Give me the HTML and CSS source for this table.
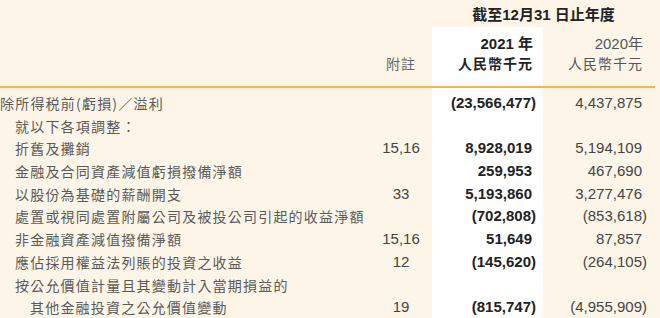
FILE: index.html
```html
<!DOCTYPE html>
<html lang="zh-Hant">
<head>
<meta charset="utf-8">
<link rel="stylesheet" href="styles.css">
</head>
<body>
<div class="sheet">
  <div class="head-top"></div>
  <div class="head-top"></div>
  <div class="head-period">截至12月31 日止年度</div>

  <div class="hcell"></div>
  <div class="hcell note-h">附註</div>
  <div class="hcell cur"><span>2021 年</span><span>人民幣千元</span></div>
  <div class="hcell prev"><span>2020年</span><span>人民幣千元</span></div>

  <div class="lbl pt">除所得税前(虧損)／溢利</div><div class="note pt"></div><div class="num cur pt">(23,566,477)</div><div class="num prev pt pos">4,437,875</div>
  <div class="lbl i1">就以下各項調整：</div><div class="note"></div><div class="num cur"></div><div class="num prev"></div>
  <div class="lbl i1">折舊及攤銷</div><div class="note">15,16</div><div class="num cur pos">8,928,019</div><div class="num prev pos">5,194,109</div>
  <div class="lbl i1">金融及合同資產減值虧損撥備淨額</div><div class="note"></div><div class="num cur pos">259,953</div><div class="num prev pos">467,690</div>
  <div class="lbl i1">以股份為基礎的薪酬開支</div><div class="note">33</div><div class="num cur pos">5,193,860</div><div class="num prev pos">3,277,476</div>
  <div class="lbl i1">處置或視同處置附屬公司及被投公司引起的收益淨額</div><div class="note"></div><div class="num cur">(702,808)</div><div class="num prev">(853,618)</div>
  <div class="lbl i1">非金融資產減值撥備淨額</div><div class="note">15,16</div><div class="num cur pos">51,649</div><div class="num prev pos">87,857</div>
  <div class="lbl i1">應佔採用權益法列賬的投資之收益</div><div class="note">12</div><div class="num cur">(145,620)</div><div class="num prev">(264,105)</div>
  <div class="lbl i1">按公允價值計量且其變動計入當期損益的</div><div class="note"></div><div class="num cur"></div><div class="num prev"></div>
  <div class="lbl i2">其他金融投資之公允價值變動</div><div class="note">19</div><div class="num cur">(815,747)</div><div class="num prev faded">(4,955,909)</div>
</div>
</body>
</html>
```

FILE: styles.css
```css
html, body {
  margin: 0;
  padding: 0;
  background: #fdf6e8;
}

.sheet {
  display: grid;
  grid-template-columns: 370px 62px 111px 112px;
  grid-template-rows: 27px auto 26.7px;
  grid-auto-rows: 22.7px;
  font-family: "Liberation Sans", Arial, sans-serif;
  color: #444;
}

.head-top {
  grid-row: 1;
}

.head-period {
  grid-row: 1;
  grid-column: 3 / 5;
  text-align: center;
  font-family: "Liberation Sans", "Noto Sans CJK TC", sans-serif;
  font-weight: bold;
  font-size: 15px;
  line-height: 30px;
  color: #222;
}

.hcell {
  grid-row: 2;
  padding: 7px 0 12px;
  border-bottom: 2px solid #f3b64c;
  display: flex;
  flex-direction: column;
  justify-content: flex-end;
  font-family: "Liberation Sans", "Noto Sans CJK TC", sans-serif;
  font-size: 15px;
  line-height: 20px;
}

.hcell span {
  display: block;
}

.note-h {
  text-align: center;
  color: #666;
  letter-spacing: 1px;
  font-size: 14px;
}

.hcell.cur {
  background: #ffffff;
  text-align: right;
  padding-right: 10px;
  font-weight: bold;
  color: #222;
}

.hcell.prev {
  text-align: right;
  padding-right: 12px;
  color: #555;
}

.hcell.cur span + span,
.hcell.prev span + span {
  font-size: 14px;
  letter-spacing: 1px;
}

.lbl {
  font-family: "Noto Sans CJK TC", sans-serif;
  font-size: 14px;
  letter-spacing: 1.2px;
  line-height: 22.7px;
  color: #5a5a5a;
  white-space: nowrap;
}

.i1 { padding-left: 15px; }
.i2 { padding-left: 30px; }

.note {
  text-align: center;
  font-size: 15px;
  line-height: 22.7px;
  color: #444;
}

.num {
  text-align: right;
  font-size: 15px;
  line-height: 22.7px;
  white-space: nowrap;
}

.num.cur {
  background: #ffffff;
  padding-right: 7px;
  font-weight: bold;
  color: #222;
}

.num.prev {
  padding-right: 8px;
  color: #444;
}

.num.pos.cur { padding-right: 11px; }
.num.pos.prev { padding-right: 13px; }

.pt { padding-top: 4px; }

.faded {
  color: #8a8a8a;
}
```
